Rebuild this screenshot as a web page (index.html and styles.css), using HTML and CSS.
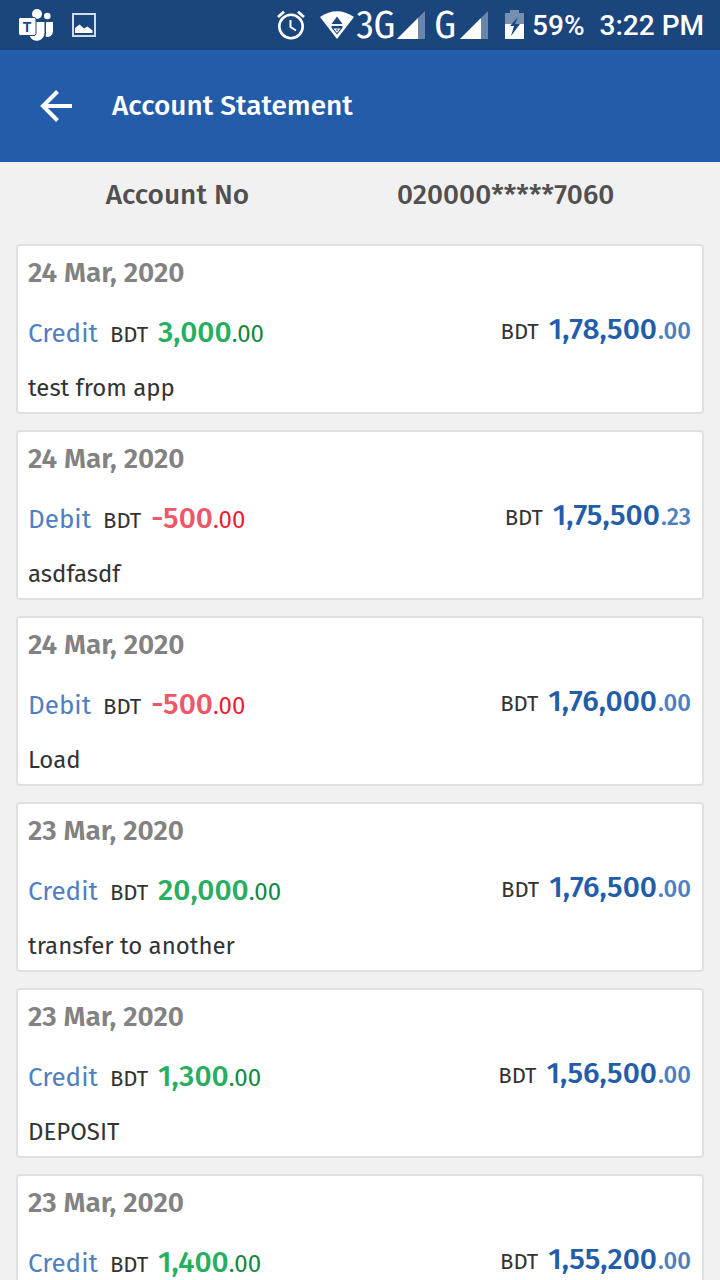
FILE: index.html
```html
<!DOCTYPE html>
<html lang="en">
<head>
    <meta charset="UTF-8">
    <meta name="viewport" content="width=device-width, initial-scale=1.0">
    <title>Account Statement</title>
    <link rel="stylesheet" href="styles.css">
</head>
<body>
    <div class="status-bar">
        <div class="notifications">
            <svg width="34" height="32" viewBox="0 0 34 32" fill="#fff">
                <circle cx="18" cy="5" r="5"/>
                <circle cx="28.300" cy="7" r="3.300"/>
                <path d="M17 13h8.500v11a7.700 7.700 0 0 1-15 2.500h5a2 2 0 0 0 1.500-2z"/>
                <path d="M26.700 13H34v9.500a5.500 5.500 0 0 1-7.500 5q.500-1.500.500-3V13z"/>
                <rect x="-.5" y="8.500" width="17.500" height="18" rx="2" stroke="#1b467d"/>
                <text x="8" y="22.500" class="teams-letter">T</text>
            </svg>
            <svg width="24" height="24" viewBox="0 0 24 24">
                <rect x="1" y="1" width="22" height="22" fill="none" stroke="#d3dbe5" stroke-width="2"/>
                <path d="M3 20v-5l4.500-3.500 4.500 4 3.500-2 5 4V20z" fill="#fff"/>
            </svg>
        </div>
        <div class="indicators">
            <svg width="28" height="30" viewBox="0 0 28 30" fill="none" stroke="#fff">
                <circle cx="14" cy="16.500" r="11.700" stroke-width="2.600"/>
                <path d="M13.500 10v7l5.500 3.500" stroke-width="2"/>
                <path d="M1 7l6-5.200M27 7l-6-5.200" stroke-width="2.800"/>
            </svg>
            <div class="network">
                <svg width="34" height="28" viewBox="0 0 34 28">
                    <path d="M0 6Q17-5.500 34 6L17 28z" fill="#fff"/>
                    <path d="M11.500 13L17 5.500 22.500 13zM11.500 15h11v1.800L17 23.500l-5.500-6.700z" fill="#1b467d"/>
                    <path d="M13.500 17.500h7L17 22z" fill="#fff"/>
                    <path d="M15.700 18.500h2.600L17 20.300z" fill="#1b467d"/>
                </svg>
                <span class="net-type">3G</span>
                <svg width="28" height="28" viewBox="0 0 28 28">
                    <path d="M0 28L28 0V28z" fill="#fff" opacity=".35"/>
                    <path d="M0 28L21 7V28z" fill="#fff"/>
                </svg>
            </div>
            <div class="network">
                <span class="net-type">G</span>
                <svg width="28" height="28" viewBox="0 0 28 28">
                    <path d="M0 28L28 0V28z" fill="#fff" opacity=".35"/>
                    <path d="M0 28L21 7V28z" fill="#fff"/>
                </svg>
            </div>
            <div class="battery">
                <svg width="19" height="29" viewBox="0 0 19 29">
                    <path d="M0 3h5V0h9v3h5v11H0z" fill="#7690b1"/>
                    <path d="M0 14h19v15H0z" fill="#fff"/>
                    <path d="M13 7L5 16h4L6 26l9-12h-5z" fill="#1b467d"/>
                </svg>
                <span>59%</span>
            </div>
            <span class="clock">3:22 PM</span>
        </div>
    </div>

    <header class="app-bar">
        <button class="back" aria-label="Back">
            <svg width="32" height="32" viewBox="0 0 32 32" fill="none" stroke="#fff" stroke-width="4">
                <path d="M32 16H3M17.500 1.500L3 16l14.500 14.500"/>
            </svg>
        </button>
        <h1>Account Statement</h1>
    </header>

    <main>
        <div class="account">
            <span>Account No</span>
            <span>020000*****7060</span>
        </div>

        <ul class="statement">
            <li class="card">
                <h2>24 Mar, 2020</h2>
                <div class="row">
                    <div class="entry credit"><span class="type">Credit</span><span class="currency">BDT</span><span class="amount">3,000<small>.00</small></span></div>
                    <div class="balance"><span class="currency">BDT</span><span class="amount">1,78,500<small>.00</small></span></div>
                </div>
                <p>test from app</p>
            </li>
            <li class="card">
                <h2>24 Mar, 2020</h2>
                <div class="row">
                    <div class="entry debit"><span class="type">Debit</span><span class="currency">BDT</span><span class="amount">-500<small>.00</small></span></div>
                    <div class="balance"><span class="currency">BDT</span><span class="amount">1,75,500<small>.23</small></span></div>
                </div>
                <p>asdfasdf</p>
            </li>
            <li class="card">
                <h2>24 Mar, 2020</h2>
                <div class="row">
                    <div class="entry debit"><span class="type">Debit</span><span class="currency">BDT</span><span class="amount">-500<small>.00</small></span></div>
                    <div class="balance"><span class="currency">BDT</span><span class="amount">1,76,000<small>.00</small></span></div>
                </div>
                <p>Load</p>
            </li>
            <li class="card">
                <h2>23 Mar, 2020</h2>
                <div class="row">
                    <div class="entry credit"><span class="type">Credit</span><span class="currency">BDT</span><span class="amount">20,000<small>.00</small></span></div>
                    <div class="balance"><span class="currency">BDT</span><span class="amount">1,76,500<small>.00</small></span></div>
                </div>
                <p>transfer to another</p>
            </li>
            <li class="card">
                <h2>23 Mar, 2020</h2>
                <div class="row">
                    <div class="entry credit"><span class="type">Credit</span><span class="currency">BDT</span><span class="amount">1,300<small>.00</small></span></div>
                    <div class="balance"><span class="currency">BDT</span><span class="amount">1,56,500<small>.00</small></span></div>
                </div>
                <p>DEPOSIT</p>
            </li>
            <li class="card">
                <h2>23 Mar, 2020</h2>
                <div class="row">
                    <div class="entry credit"><span class="type">Credit</span><span class="currency">BDT</span><span class="amount">1,400<small>.00</small></span></div>
                    <div class="balance"><span class="currency">BDT</span><span class="amount">1,55,200<small>.00</small></span></div>
                </div>
            </li>
        </ul>
    </main>
</body>
</html>
```
FILE: styles.css
```css
* {
    margin: 0;
    padding: 0;
    box-sizing: border-box;
}

body {
    height: 100vh;
    display: flex;
    flex-direction: column;
    overflow: hidden;
    background: #f1f1f1;
    color: #333;
    font-family: "Fira Sans", "Noto Sans", sans-serif;
}

svg {
    display: block;
    flex: none;
}

/* Status bar */
.status-bar {
    flex: none;
    height: 50px;
    padding: 0 16px 0 19px;
    display: flex;
    justify-content: space-between;
    align-items: center;
    background: #1b467d;
    color: #fff;
    font: 500 28px/54px Roboto, sans-serif;
}

.notifications {
    display: flex;
    align-items: center;
    gap: 19px;
}

.teams-letter {
    font: bold 14px "Liberation Sans", sans-serif;
    text-anchor: middle;
    fill: #1b467d;
}

.indicators {
    display: flex;
    align-items: center;
    gap: 15px;
}

.network {
    display: flex;
    align-items: center;
    gap: 2px;
}

.network + .network {
    margin: 0 2px 0 -6px;
    gap: 4px;
}

.net-type {
    font: 400 38px/50px "Fira Sans Condensed", "Open Sans", sans-serif;
}

.battery,
.clock {
    margin-top: 2px;
}

.battery {
    display: flex;
    align-items: center;
    gap: 8px;
}

.battery svg {
    margin-bottom: 4px;
}

/* App bar */
.app-bar {
    flex: none;
    height: 112px;
    padding: 0 40px;
    display: flex;
    align-items: center;
    gap: 40px;
    background: #235daa;
    color: #fff;
}

.app-bar h1 {
    padding-bottom: 2px;
    font-size: 28px;
    font-weight: 500;
}

.back {
    border: none;
    background: none;
    cursor: pointer;
}

main {
    flex: 1;
    min-height: 0;
    overflow-y: auto;
    scrollbar-width: none;
}

/* Account number */
.account {
    padding: 13px 16px 29px;
    display: flex;
    justify-content: center;
    gap: 148px;
    color: #505050;
    font-size: 28px;
    font-weight: 500;
    line-height: 40px;
}

/* Transactions */
.statement {
    padding: 0 16px 16px;
    display: flex;
    flex-direction: column;
    gap: 16px;
    list-style: none;
}

.card {
    min-height: 170px;
    padding: 10px 11px 6px 10px;
    background: #fff;
    border: 2px solid #e0e0e0;
    border-radius: 4px;
}

.card h2 {
    color: #828282;
    font-size: 28px;
    font-weight: 600;
    line-height: 34px;
}

.card p {
    font-size: 24px;
    line-height: 34px;
}

.row {
    height: 40px;
    margin: 22px 0 19px;
    display: flex;
    justify-content: space-between;
    line-height: 40px;
}

.entry,
.balance {
    display: flex;
    align-items: baseline;
    gap: 10px;
}

.balance {
    margin-top: -3px;
}

.type {
    margin-right: 2px;
    color: #4f7fc2;
    font-size: 26px;
}

.currency {
    font-size: 22px;
}

.amount {
    font-size: 30px;
    font-weight: 500;
}

.amount small {
    font-size: 24px;
    font-weight: 400;
}

.credit .amount {
    color: #27ae60;
}

.credit small {
    color: #118841;
}

.debit .amount {
    color: #ee5767;
}

.debit small {
    color: #eb1c34;
}

.balance .amount {
    color: #235daa;
}

.balance small {
    margin-left: 1px;
    color: #4f7fc2;
    font-weight: 500;
}
```
